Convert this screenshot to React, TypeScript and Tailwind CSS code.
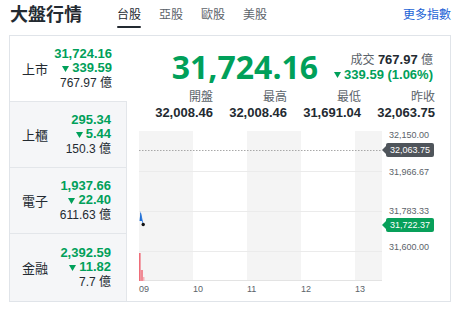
import React from 'react';

const GREEN = 'text-[#00a05a]';
const NUM = 'font-["Liberation_Sans","Noto_Sans_CJK_TC",sans-serif]';

interface Market {
  name: string;
  price: string;
  change: string;
  volume: string;
  active?: boolean;
}

const markets: Market[] = [
  { name: '上市', price: '31,724.16', change: '339.59', volume: '767.97', active: true },
  { name: '上櫃', price: '295.34', change: '5.44', volume: '150.3' },
  { name: '電子', price: '1,937.66', change: '22.40', volume: '611.63' },
  { name: '金融', price: '2,392.59', change: '11.82', volume: '7.7' },
];

const stats = [
  { label: '開盤', value: '32,008.46' },
  { label: '最高', value: '32,008.46' },
  { label: '最低', value: '31,691.04' },
  { label: '昨收', value: '32,063.75' },
];

const tabs = ['台股', '亞股', '歐股', '美股'];

const font = { fontFamily: '"Open Sans", "Noto Sans CJK TC", sans-serif' };

const Down = ({ mr }: { mr: string }) => (
  <svg width="7" height="6" viewBox="0 0 7 6" className={mr}>
    <polygon points="0,0 7,0 3.5,6" fill="currentColor" />
  </svg>
);

const MarketItem = ({ m, last }: { m: Market; last: boolean }) => (
  <div
    className={
      'flex items-center justify-between pl-[12px] pr-[15px] ' +
      (last ? 'flex-1 ' : 'h-[66px] border-b border-[#e3e6ea] ') +
      (m.active ? 'bg-white' : 'bg-[#f5f6f8] border-r border-r-[#e3e6ea]')
    }
  >
    <div className="text-[13px] leading-[16px] text-[#232a31]">{m.name}</div>
    <div className={`flex flex-col items-end ${NUM}`}>
      <div className={`h-[14.5px] text-[13px] font-bold leading-[14.5px] ${GREEN}`}>{m.price}</div>
      <div className={`flex h-[14.5px] items-center text-[13px] font-bold leading-[14.5px] ${GREEN}`}>
        <Down mr="mr-[3px]" />
        {m.change}
      </div>
      <div className="h-[14.5px] text-[12px] leading-[14.5px] text-[#232a31]">{m.volume} 億</div>
    </div>
  </div>
);

const PriceTag = ({ value, color, top }: { value: string; color: string; top: string }) => (
  <div className={`absolute left-0 flex items-center ${top}`}>
    <svg width="4" height="14" viewBox="0 0 4 14">
      <polygon points="4,3 0,7 4,11" fill={color} />
    </svg>
    <div
      className="h-[14px] w-[48px] rounded-[2px] pl-[4px] text-[9px] leading-[14px] text-white"
      style={{ backgroundColor: color }}
    >
      {value}
    </div>
  </div>
);

const Chart = () => (
  <div className={`ml-[12px] flex flex-col ${NUM}`}>
    <div className="flex">
      <svg width="243" height="150" viewBox="0 0 243 150">
        <rect x="0" y="0" width="54" height="150" fill="#f4f4f4" />
        <rect x="108" y="0" width="54" height="150" fill="#f4f4f4" />
        <rect x="216" y="0" width="27" height="150" fill="#f4f4f4" />
        <line x1="0" y1="40.5" x2="243" y2="40.5" stroke="#ebebeb" />
        <line x1="0" y1="80.5" x2="243" y2="80.5" stroke="#ebebeb" />
        <line x1="0" y1="120.5" x2="243" y2="120.5" stroke="#ebebeb" />
        <line x1="0" y1="149.5" x2="243" y2="149.5" stroke="#e3e3e3" />
        <line x1="0" y1="19.5" x2="243" y2="19.5" stroke="#a8a8a8" strokeDasharray="1.5 1.5" />
        <path d="M0.5,90 L1.6,80 L3.2,90 Z" fill="#1f6fd6" />
        <line x1="1.6" y1="82" x2="4" y2="93" stroke="#1f6fd6" strokeWidth="0.8" />
        <circle cx="4.2" cy="93.5" r="1.7" fill="#111" />
        <rect x="0" y="122" width="1.6" height="28" fill="#ee6d79" />
        <rect x="1.6" y="139" width="2.4" height="11" fill="#f08a94" />
        <rect x="4" y="146" width="1.5" height="4" fill="#f5b3b9" />
      </svg>
      <div className="relative w-[68px] text-[9px] text-[#5b636a]">
        <span className="absolute left-[7px] top-[-2px] leading-[12px]">32,150.00</span>
        <span className="absolute left-[7px] top-[35px] leading-[12px]">31,966.67</span>
        <span className="absolute left-[7px] top-[74px] leading-[12px]">31,783.33</span>
        <span className="absolute left-[7px] top-[110px] leading-[12px]">31,600.00</span>
        <PriceTag value="32,063.75" color="#4f555b" top="top-[12px]" />
        <PriceTag value="31,722.37" color="#08a05a" top="top-[87px]" />
      </div>
    </div>
    <div className="flex pt-[2px] text-[9px] leading-[12px] text-[#5b636a]">
      {['09', '10', '11', '12', '13'].map((h) => (
        <span key={h} className="w-[54px]">
          {h}
        </span>
      ))}
    </div>
  </div>
);

export default function App() {
  return (
    <div className="w-[459px] h-[316px] bg-white pl-[9px] pr-[8px]" style={font}>
      <div className="flex h-[35px] items-start">
        <h1 className="pl-[1px] pt-[3px] text-[18px] font-bold leading-[22px] text-[#232a31]">大盤行情</h1>
        <nav className="ml-[35px] flex gap-[18px]">
          {tabs.map((t, i) => (
            <div key={t} className="flex flex-col">
              <span
                className={
                  'pt-[7px] text-[12px] leading-[16px] ' +
                  (i === 0 ? 'text-[#232a31]' : 'text-[#5b636a]')
                }
              >
                {t}
              </span>
              {i === 0 && <div className="mt-[3px] h-[2px] rounded-full bg-[#232a31]" />}
            </div>
          ))}
        </nav>
        <a className="ml-auto pt-[7px] text-[12px] leading-[16px] text-[#1d63d6]">更多指數</a>
      </div>

      <div className="flex h-[267px] border border-[#e0e4e9]">
        <div className="flex w-[118px] flex-col">
          {markets.map((m, i) => (
            <MarketItem key={m.name} m={m} last={i === markets.length - 1} />
          ))}
        </div>

        <div className="flex flex-1 flex-col">
          <div className="flex items-center justify-end gap-[16px] pr-[17px] pt-[11px]">
            <span className={`text-[32px] font-bold leading-[40px] ${GREEN}`}>31,724.16</span>
            <div className={`flex flex-col items-end ${NUM}`}>
              <div className="h-[15px] text-[12px] leading-[15px] text-[#5b636a]">
                成交 <b className="text-[13px] text-[#232a31]">767.97</b> 億
              </div>
              <div className={`flex h-[15px] items-center text-[13px] font-bold leading-[15px] ${GREEN}`}>
                <Down mr="mr-[3px]" />
                339.59 (1.06%)
              </div>
            </div>
          </div>
          <div className={`ml-auto mr-[15px] mt-[3px] grid w-[296px] grid-cols-4 ${NUM}`}>
            {stats.map((s) => (
              <div key={s.label} className="flex flex-col items-end">
                <span className="text-[12px] leading-[15px] text-[#5b636a]">{s.label}</span>
                <span className="text-[13px] font-bold leading-[16px] text-[#232a31]">{s.value}</span>
              </div>
            ))}
          </div>
          <div className="mt-[10px]">
            <Chart />
          </div>
        </div>
      </div>
    </div>
  );
}
